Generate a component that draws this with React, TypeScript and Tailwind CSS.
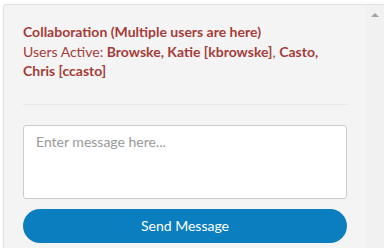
export default function App() {
  return (
    <div className="h-[248px] w-[384px] overflow-hidden bg-white pl-[3px] pt-[4px] font-['Lato','Noto_Sans',sans-serif]">
      <div className="flex h-full rounded-tl-[4px] border-l border-t border-[#e2e2e2] bg-[#f4f4f4] shadow-[0_0_2px_rgba(0,0,0,0.08)]">
        {/* Content */}
        <div className="w-[362px] shrink-0 px-[19px] pt-[17px]">
          <div className="text-[14px] leading-[19.5px] text-[#a43c39]">
            <div className="font-bold">Collaboration (Multiple users are here)</div>
            <div>
              Users Active: <span className="font-bold">Browske, Katie [kbrowske]</span>,{' '}
              <span className="font-bold">Casto, Chris [ccasto]</span>
            </div>
          </div>
          <hr className="mt-[23px] border-t border-[#e7e7e7]" />
          <textarea
            placeholder="Enter message here..."
            className="mt-[20px] block h-[74px] w-full resize-none rounded-[3px] border border-[#cccccc] bg-white px-[12px] py-[6px] text-[14px] leading-[20px] text-[#333] placeholder:text-[#999] outline-none"
          />
          <button className="mt-[10px] flex h-[34px] w-full items-center justify-center rounded-full bg-[#0a7ebe] text-[14px] text-white">
            Send Message
          </button>
        </div>
        {/* Scrollbar */}
        <div className="flex-1 bg-[#f1f1f1] pt-[8px]">
          <div className="mx-auto h-0 w-0 border-x-[4px] border-b-[4px] border-x-transparent border-b-[#a3a3a3]" />
        </div>
      </div>
    </div>
  );
}
